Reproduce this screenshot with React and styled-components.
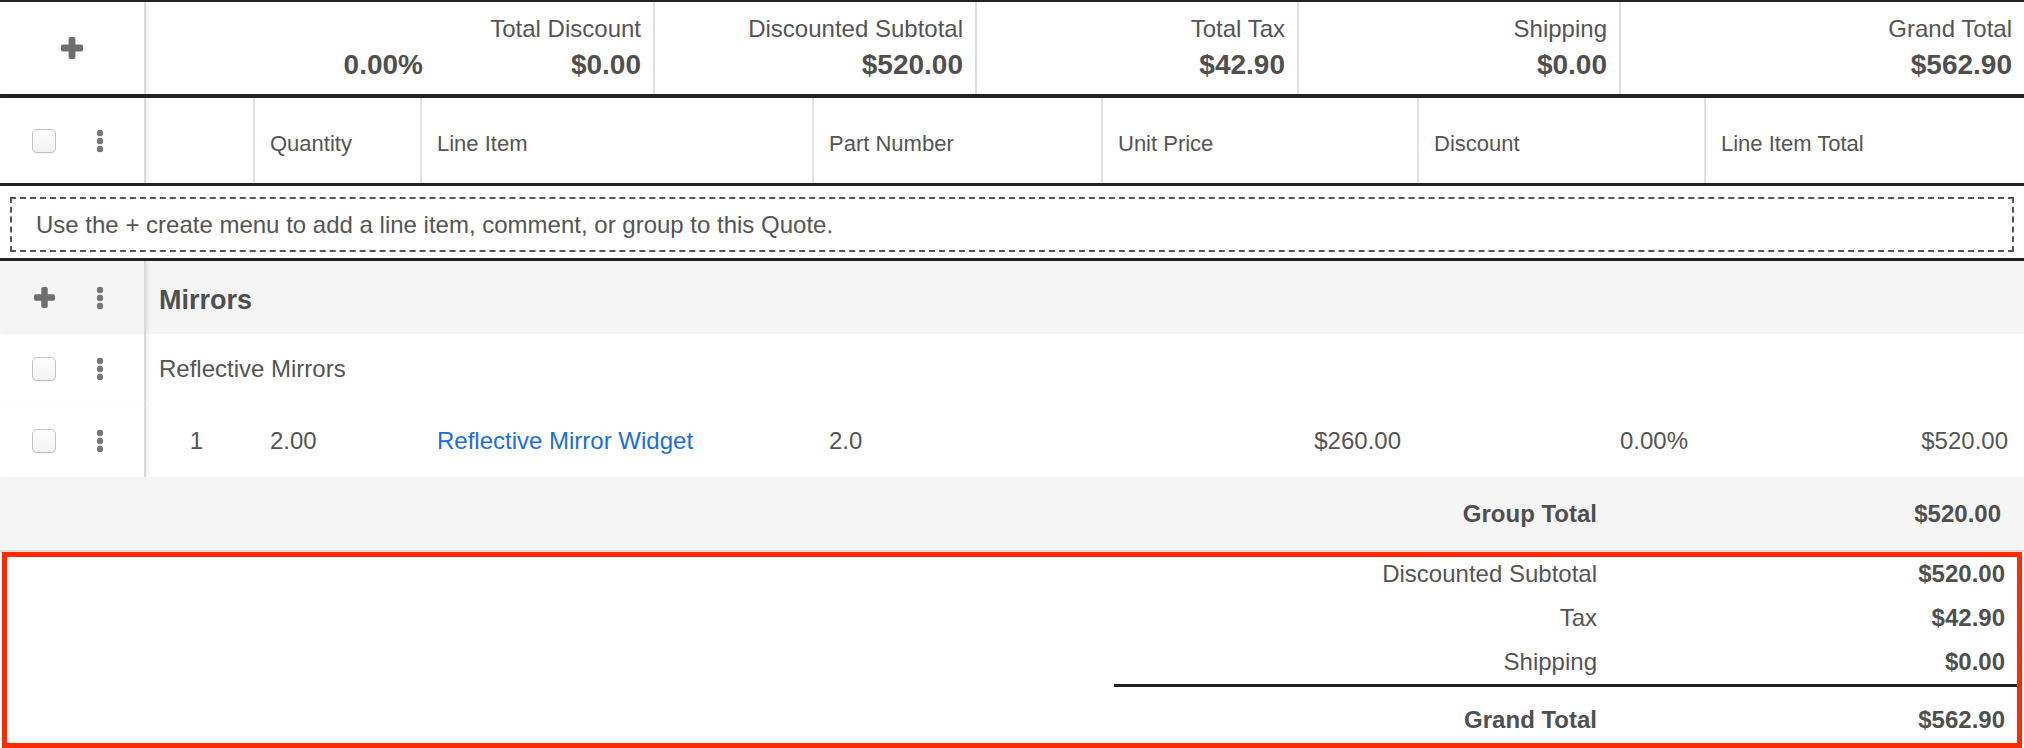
import React from "react";
import styled, { createGlobalStyle } from "styled-components";

const GlobalStyle = createGlobalStyle`
  *, *::before, *::after { box-sizing: border-box; }
  html, body { margin: 0; padding: 0; background: #fff; }
  body { font-family: "Liberation Sans", Arial, sans-serif; }
`;

const COLS = "146px 107px 167px 392px 289px 316px 287px 320px";

const Page = styled.div`
  width: 2024px;
  height: 748px;
  overflow: hidden;
  background: #fff;
  color: #555;
  font-family: "Liberation Sans", Arial, sans-serif;
  border-top: 2px solid #222;
`;

const SummaryBar = styled.div`
  display: flex;
  height: 96px;
  border-bottom: 4px solid #222;
`;

const ControlCell = styled.div`
  position: relative;
  z-index: 1;
  flex: 0 0 146px;
  width: 146px;
  display: flex;
  align-items: center;
  justify-content: ${(p) => (p.$center ? "center" : "flex-start")};
  padding-left: ${(p) => (p.$center ? "0" : "32px")};
  gap: 40px;
  border-right: 2px solid #d9d9d9;
  box-shadow: 3px 0 3px -1px rgba(0, 0, 0, 0.08);
`;

const Slot = styled.span`
  width: 24px;
  height: 24px;
  display: inline-flex;
  align-items: center;
  justify-content: center;
`;

const Checkbox = styled.span`
  display: inline-block;
  width: 24px;
  height: 24px;
  border: 1px solid #c2c2c2;
  border-radius: 5px;
  background: linear-gradient(#ffffff, #f2f2f2);
  box-shadow: 0 1px 1px rgba(0, 0, 0, 0.06);
`;

const IconSvg = styled.svg`
  display: block;
  fill: ${(p) => p.$color || "#6e6e6e"};
`;

const PlusIcon = ({ size = 22 }) => (
  <IconSvg width={size} height={size} viewBox="0 0 22 22">
    <rect x="7.6" y="0" width="6.8" height="22" rx="2" />
    <rect x="0" y="7.6" width="22" height="6.8" rx="2" />
  </IconSvg>
);

const KebabIcon = () => (
  <IconSvg width="8" height="24" viewBox="0 0 8 24" $color="#777">
    <circle cx="4" cy="4" r="3.2" />
    <circle cx="4" cy="12" r="3.2" />
    <circle cx="4" cy="20" r="3.2" />
  </IconSvg>
);

const TotalsGrid = styled.div`
  flex: 1;
  display: grid;
  grid-template-columns: 507px 322px 322px 322px 1fr;
`;

const DiscountCell = styled.div`
  display: grid;
  grid-template-columns: 289px 1fr;
`;

const SummaryCell = styled.div`
  display: flex;
  flex-direction: column;
  align-items: flex-end;
  padding: 13px 12px 0 0;
  border-left: ${(p) => (p.$divider ? "2px solid #dedede" : "none")};
`;

const SummaryLabel = styled.div`
  font-size: 24px;
  line-height: 28px;
  min-height: 28px;
`;

const SummaryValue = styled.div`
  font-size: 28px;
  line-height: 34px;
  font-weight: 700;
  color: #4f4f4f;
  margin-top: 5px;
`;

const HeaderRow = styled.div`
  display: grid;
  grid-template-columns: ${COLS};
  height: 88px;
  border-bottom: 3px solid #222;
`;

const HeadCell = styled.div`
  display: flex;
  align-items: center;
  padding: 6px 0 0 15px;
  font-size: 22px;
  border-left: ${(p) => (p.$divider ? "2px solid #e1e1e1" : "none")};
`;

const EmptySection = styled.div`
  height: 75px;
  padding: 11px 10px 0 10px;
  border-bottom: 3px solid #222;
`;

const DashedBox = styled.div`
  height: 55px;
  border: 2px dashed #555;
  display: flex;
  align-items: center;
  padding-left: 24px;
  font-size: 24px;
`;

const GroupHeaderRow = styled.div`
  display: flex;
  height: 73px;
  background: #f5f5f5;
`;

const GroupName = styled.div`
  display: flex;
  align-items: center;
  padding: 5px 0 0 13px;
  font-size: 27px;
  font-weight: 700;
  color: #4f4f4f;
`;

const ItemRow = styled.div`
  display: grid;
  grid-template-columns: ${COLS};
  height: ${(p) => p.$h}px;
  background: #fff;
`;

const Cell = styled.div`
  display: flex;
  align-items: center;
  font-size: 24px;
  padding: 0 16px 0 17px;
  grid-column: ${(p) => p.$span || "auto"};
  justify-content: ${(p) =>
    p.$align === "right" ? "flex-end" : p.$align === "center" ? "center" : "flex-start"};
`;

const ItemLink = styled.a`
  color: #1a6fdc;
  text-decoration: none;
`;

const TotalLine = styled.div`
  display: grid;
  grid-template-columns: 1fr ${(p) => p.$valueCol}px;
  align-items: center;
  height: ${(p) => p.$h}px;
  padding-top: ${(p) => p.$pt || 0}px;
  font-size: 24px;
  font-weight: ${(p) => (p.$bold ? 700 : 400)};
  background: ${(p) => p.$bg || "transparent"};
  border-bottom: ${(p) => (p.$border ? "2px solid #dcdcdc" : "none")};
`;

const TotalLabel = styled.div`
  text-align: right;
  color: ${(p) => (p.$bold ? "#4f4f4f" : "#555")};
`;

const TotalValue = styled.div`
  text-align: right;
  font-weight: 700;
  color: #4f4f4f;
  padding-right: ${(p) => p.$pr}px;
`;

const QuoteTotals = styled.div`
  margin: 0 2px;
  height: 196px;
  outline: 5px solid #ff2a00;
  outline-offset: -5px;
`;

const Rule = styled.div`
  height: 3px;
  background: #222;
  margin-left: 1112px;
`;

const RowControls = ({ plus }) => (
  <ControlCell>
    <Slot>{plus ? <PlusIcon size={21} /> : <Checkbox />}</Slot>
    <KebabIcon />
  </ControlCell>
);

export default function App() {
  return (
    <>
      <GlobalStyle />
      <Page>
        <SummaryBar>
          <ControlCell $center>
            <PlusIcon />
          </ControlCell>
          <TotalsGrid>
            <DiscountCell>
              <SummaryCell>
                <SummaryLabel />
                <SummaryValue>0.00%</SummaryValue>
              </SummaryCell>
              <SummaryCell>
                <SummaryLabel>Total Discount</SummaryLabel>
                <SummaryValue>$0.00</SummaryValue>
              </SummaryCell>
            </DiscountCell>
            <SummaryCell $divider>
              <SummaryLabel>Discounted Subtotal</SummaryLabel>
              <SummaryValue>$520.00</SummaryValue>
            </SummaryCell>
            <SummaryCell $divider>
              <SummaryLabel>Total Tax</SummaryLabel>
              <SummaryValue>$42.90</SummaryValue>
            </SummaryCell>
            <SummaryCell $divider>
              <SummaryLabel>Shipping</SummaryLabel>
              <SummaryValue>$0.00</SummaryValue>
            </SummaryCell>
            <SummaryCell $divider>
              <SummaryLabel>Grand Total</SummaryLabel>
              <SummaryValue>$562.90</SummaryValue>
            </SummaryCell>
          </TotalsGrid>
        </SummaryBar>

        <HeaderRow>
          <RowControls />
          <HeadCell />
          <HeadCell $divider>Quantity</HeadCell>
          <HeadCell $divider>Line Item</HeadCell>
          <HeadCell $divider>Part Number</HeadCell>
          <HeadCell $divider>Unit Price</HeadCell>
          <HeadCell $divider>Discount</HeadCell>
          <HeadCell $divider>Line Item Total</HeadCell>
        </HeaderRow>

        <EmptySection>
          <DashedBox>
            Use the + create menu to add a line item, comment, or group to this Quote.
          </DashedBox>
        </EmptySection>

        <GroupHeaderRow>
          <RowControls plus />
          <GroupName>Mirrors</GroupName>
        </GroupHeaderRow>

        <ItemRow $h={70}>
          <RowControls />
          <Cell $span="2 / -1" style={{ paddingLeft: 13 }}>Reflective Mirrors</Cell>
        </ItemRow>

        <ItemRow $h={73}>
          <RowControls />
          <Cell $align="center" style={{ padding: "0 6px 0 0" }}>1</Cell>
          <Cell>2.00</Cell>
          <Cell>
            <ItemLink href="#">Reflective Mirror Widget</ItemLink>
          </Cell>
          <Cell>2.0</Cell>
          <Cell $align="right">$260.00</Cell>
          <Cell $align="right">0.00%</Cell>
          <Cell $align="right">$520.00</Cell>
        </ItemRow>

        <TotalLine $valueCol={427} $h={75} $bg="#f5f5f5" $border $bold>
          <TotalLabel $bold>Group Total</TotalLabel>
          <TotalValue $pr={23}>$520.00</TotalValue>
        </TotalLine>

        <QuoteTotals>
          <TotalLine $valueCol={425} $h={44}>
            <TotalLabel>Discounted Subtotal</TotalLabel>
            <TotalValue $pr={17}>$520.00</TotalValue>
          </TotalLine>
          <TotalLine $valueCol={425} $h={44}>
            <TotalLabel>Tax</TotalLabel>
            <TotalValue $pr={17}>$42.90</TotalValue>
          </TotalLine>
          <TotalLine $valueCol={425} $h={44}>
            <TotalLabel>Shipping</TotalLabel>
            <TotalValue $pr={17}>$0.00</TotalValue>
          </TotalLine>
          <Rule />
          <TotalLine $valueCol={425} $h={61} $pt={5} $bold>
            <TotalLabel $bold>Grand Total</TotalLabel>
            <TotalValue $pr={17}>$562.90</TotalValue>
          </TotalLine>
        </QuoteTotals>
      </Page>
    </>
  );
}
